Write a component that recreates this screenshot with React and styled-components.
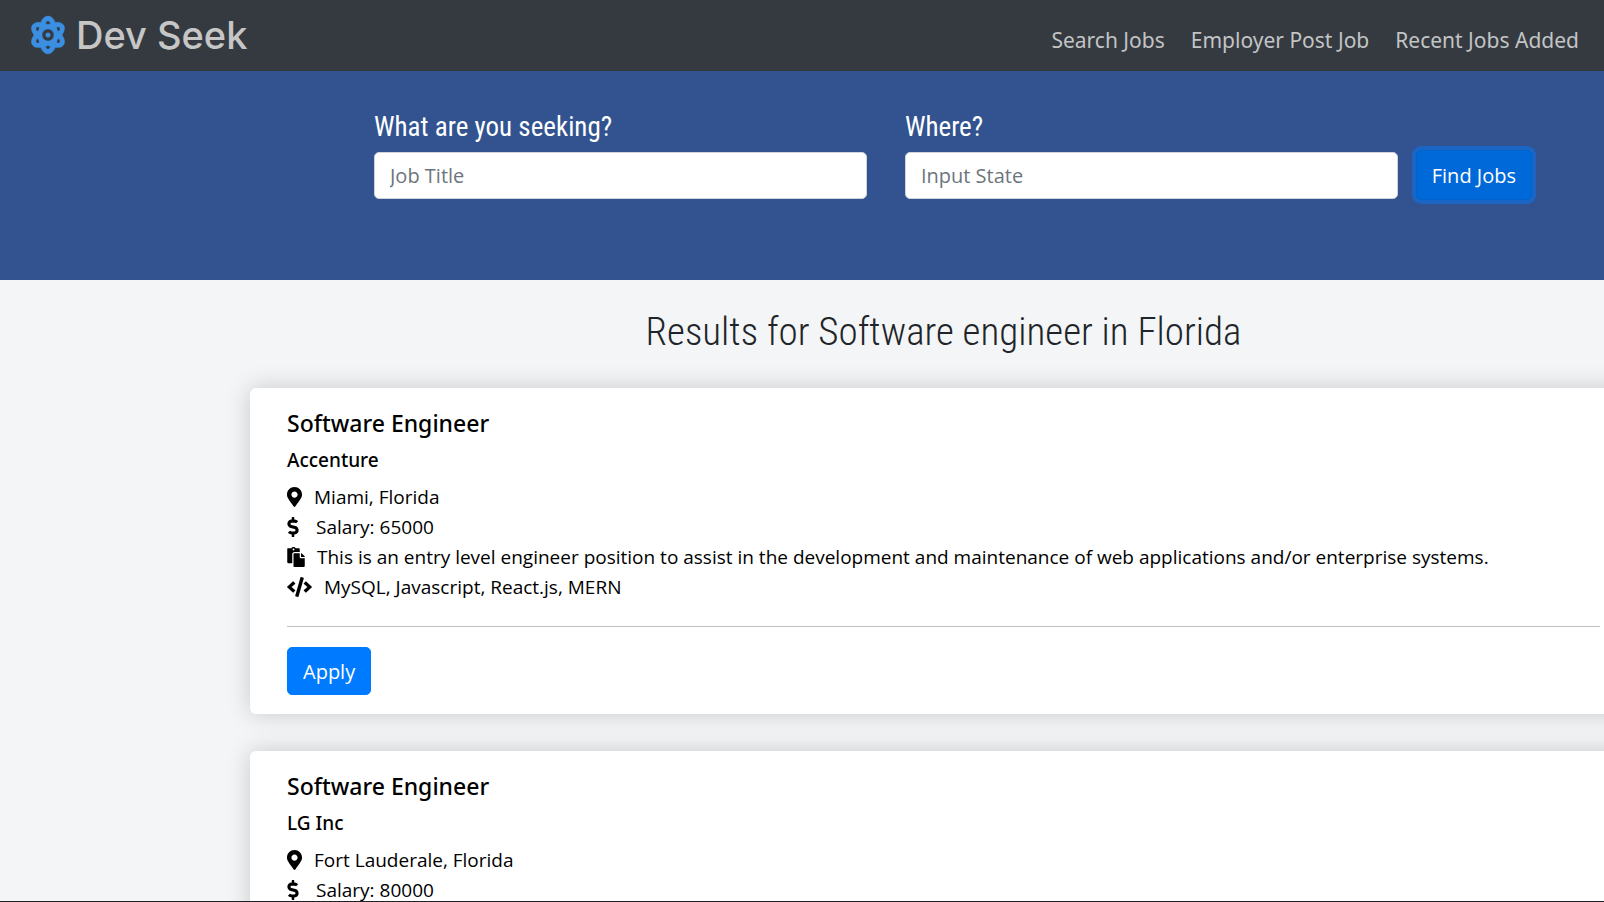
import React from 'react';
import styled, { createGlobalStyle } from 'styled-components';
import { FaAtom, FaMapMarkerAlt, FaDollarSign, FaPaste, FaCode } from 'react-icons/fa';

const bodyFont = '"Open Sans", "Noto Sans", sans-serif';
const headingFont = '"Noto Sans", "Open Sans", sans-serif';
const displayFont = '"Roboto Condensed", "Open Sans Condensed", sans-serif';

const GlobalStyle = createGlobalStyle`
  *, *::before, *::after { box-sizing: border-box; }
  body {
    margin: 0;
    background: #f4f5f7;
    color: #212529;
    font-family: ${bodyFont};
    font-size: 19px;
    line-height: 30px;
  }
`;

const Page = styled.div`
  height: 100vh;
  overflow: hidden;
  border-bottom: 1px solid #1f2023;
`;

const Header = styled.header`
  display: flex;
  align-items: center;
  justify-content: space-between;
  min-height: 71px;
  padding: 0 25px 0 31px;
  background: #353a40;
`;

const Brand = styled.a`
  display: flex;
  align-items: center;
  gap: 11px;
  padding-bottom: 2px;
  color: #c6c6c6;
  font-family: Inter, sans-serif;
  font-size: 38px;
  font-weight: 500;
  line-height: 48px;
  text-decoration: none;

  svg {
    width: 34px;
    height: 38px;
    overflow: visible;
    color: #3b8fe2;
    stroke-width: 4px;
  }
`;

const Nav = styled.nav`
  display: flex;
  gap: 26px;
  padding-top: 8px;
`;

const NavLink = styled.a`
  color: #c2c4c6;
  font-family: ${headingFont};
  font-size: 21px;
  line-height: 32px;
  text-decoration: none;
  white-space: nowrap;
`;

const SearchForm = styled.form`
  display: flex;
  align-items: flex-end;
  gap: 18px;
  padding: 40px 72px 80px 374px;
  background: #325390;
`;

const Fields = styled.div`
  display: grid;
  flex: 1;
  grid-template-columns: 1fr 1fr;
  gap: 38px;
  padding-bottom: 1px;
`;

const Field = styled.div`
  display: flex;
  flex-direction: column;
  gap: 9px;
`;

const FieldLabel = styled.label`
  color: #fff;
  font-family: ${displayFont};
  font-size: 27px;
  line-height: 32px;
`;

const TextInput = styled.input`
  width: 100%;
  height: 47px;
  padding: 0 15px;
  border: 1px solid #ced4da;
  border-radius: 5px;
  background: #fff;
  color: #495057;
  font-family: inherit;
  font-size: 20px;

  &::placeholder { color: #6c757d; opacity: 1; }
`;

const Button = styled.button`
  height: ${({ $active }) => ($active ? 50 : 48)}px;
  padding: 1px 15px 0;
  border: 1px solid ${({ $active }) => ($active ? '#0062cc' : '#007bff')};
  border-radius: 5px;
  background: ${({ $active }) => ($active ? '#0069d9' : '#007bff')};
  box-shadow: ${({ $active }) => ($active ? '0 0 0 4px #1b66c4' : 'none')};
  color: #fff;
  font-family: inherit;
  font-size: 20px;
  line-height: 30px;
`;

const Results = styled.main`
  display: flex;
  flex-direction: column;
  margin: 0 -33px 0 250px;
  padding-top: 29px;
`;

const ResultsTitle = styled.h1`
  margin: 0 0 33px;
  font-family: ${displayFont};
  font-size: 39px;
  font-weight: 300;
  line-height: 46px;
  text-align: center;
`;

const Card = styled.article`
  margin-bottom: 37px;
  padding: 19px 37px;
  border-radius: 6px;
  background: #fff;
  box-shadow: 0 0 24px rgba(0, 0, 0, 0.18);
  color: #000;
`;

const JobTitle = styled.h2`
  margin: 0 0 6px;
  font-family: ${headingFont};
  font-size: 23px;
  font-weight: 500;
  line-height: 32px;
`;

const Company = styled.h3`
  margin: 0 0 7px;
  font-family: ${headingFont};
  font-size: 19px;
  font-weight: 500;
  line-height: 30px;
`;

const Details = styled.ul`
  margin: 0;
  padding: 0;
  list-style: none;
`;

const Detail = styled.li`
  display: flex;
  align-items: center;
  gap: ${({ $gap = 12 }) => $gap}px;

  svg {
    flex: none;
    width: ${({ $icon }) => $icon}px;
    height: 20px;
  }
`;

const Divider = styled.hr`
  margin: 24px 0 20px;
  border: 0;
  border-top: 1px solid #bfbfbf;
`;

const jobs = [
  {
    company: 'Accenture',
    location: 'Miami, Florida',
    salary: 65000,
    description:
      'This is an entry level engineer position to assist in the development and maintenance of web applications and/or enterprise systems.',
    skills: 'MySQL, Javascript, React.js, MERN',
  },
  { company: 'LG Inc', location: 'Fort Lauderale, Florida', salary: 80000 },
];

function JobCard({ job }) {
  return (
    <Card>
      <JobTitle>Software Engineer</JobTitle>
      <Company>{job.company}</Company>
      <Details>
        <Detail $icon={15}><FaMapMarkerAlt />{job.location}</Detail>
        <Detail $icon={12} $gap={17}><FaDollarSign />{`Salary: ${job.salary}`}</Detail>
        {job.description && <Detail $icon={18}><FaPaste />{job.description}</Detail>}
        {job.skills && <Detail $icon={25}><FaCode />{job.skills}</Detail>}
      </Details>
      {job.description && (
        <>
          <Divider />
          <Button type="button">Apply</Button>
        </>
      )}
    </Card>
  );
}

export default function App() {
  return (
    <Page>
      <GlobalStyle />
      <Header>
        <Brand href="#home"><FaAtom />Dev Seek</Brand>
        <Nav>
          <NavLink href="#search">Search Jobs</NavLink>
          <NavLink href="#post">Employer Post Job</NavLink>
          <NavLink href="#recent">Recent Jobs Added</NavLink>
        </Nav>
      </Header>
      <SearchForm onSubmit={(e) => e.preventDefault()}>
        <Fields>
          <Field>
            <FieldLabel htmlFor="job-title">What are you seeking?</FieldLabel>
            <TextInput id="job-title" placeholder="Job Title" />
          </Field>
          <Field>
            <FieldLabel htmlFor="job-state">Where?</FieldLabel>
            <TextInput id="job-state" placeholder="Input State" />
          </Field>
        </Fields>
        <Button type="submit" $active>Find Jobs</Button>
      </SearchForm>
      <Results>
        <ResultsTitle>Results for Software engineer in Florida</ResultsTitle>
        {jobs.map((job) => <JobCard key={job.company} job={job} />)}
      </Results>
    </Page>
  );
}
